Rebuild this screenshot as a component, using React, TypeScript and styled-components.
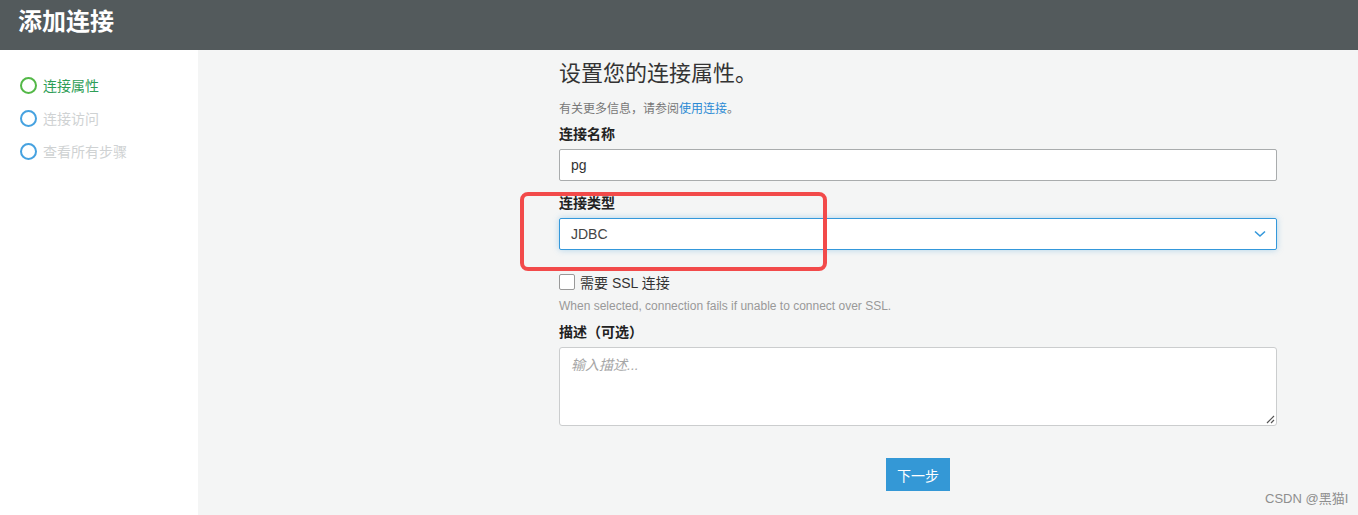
import React from 'react'
import styled, { createGlobalStyle } from 'styled-components'

const GlobalStyle = createGlobalStyle`
  html, body {
    margin: 0;
    padding: 0;
    background: #ffffff;
  }
  body {
    font-family: "Liberation Sans", "Noto Sans CJK SC", sans-serif;
    color: #333;
  }
`

const Page = styled.div`
  position: relative;
  width: 1358px;
  height: 515px;
  overflow: hidden;
`

const Header = styled.header`
  height: 50px;
  background: #535a5c;
  display: flex;
  align-items: center;
  padding: 0 0 0 18px;
  box-sizing: border-box;

  h1 {
    margin: -10px 0 0;
    font-size: 24px;
    line-height: 30px;
    font-weight: 700;
    color: #ffffff;
    font-family: "Noto Sans CJK SC", sans-serif;
  }
`

const Body = styled.div`
  display: flex;
  height: 465px;
`

const Sidebar = styled.nav`
  width: 198px;
  background: #ffffff;
  padding: 25px 0 0 20px;
  box-sizing: border-box;
  display: flex;
  flex-direction: column;
  gap: 13px;
`

const Step = styled.div<{ $active?: boolean }>`
  display: flex;
  align-items: center;
  gap: 6px;
  height: 20px;
  font-size: 14px;
  font-family: "Noto Sans CJK SC", sans-serif;
  color: ${p => (p.$active ? '#2f9e57' : '#cfd2d3')};

  &::before {
    content: '';
    width: 13px;
    height: 13px;
    border-radius: 50%;
    border: 2px solid ${p => (p.$active ? '#53b847' : '#46a2e0')};
    flex-shrink: 0;
  }
`

const Main = styled.main`
  flex: 1;
  background: #f4f5f5;
  padding: 8px 0 0 361px;
  box-sizing: border-box;
`

const Form = styled.div`
  width: 718px;
  display: flex;
  flex-direction: column;
`

const Title = styled.h2`
  margin: 0;
  font-size: 22px;
  line-height: 26px;
  font-weight: 400;
  color: #333;
  font-family: "Noto Sans CJK SC", sans-serif;
`

const Info = styled.p`
  margin: 16px 0 7px;
  font-size: 12px;
  line-height: 16px;
  color: #777;
  font-family: "Noto Sans CJK SC", sans-serif;

  a {
    color: #2a8ad4;
    text-decoration: none;
  }
`

const Label = styled.label<{ $gap?: number }>`
  display: block;
  margin: ${p => p.$gap ?? 0}px 0 6px;
  font-size: 14px;
  line-height: 20px;
  font-weight: 700;
  color: #222;
  font-family: "Noto Sans CJK SC", sans-serif;
`

const TextInput = styled.div`
  height: 32px;
  box-sizing: border-box;
  border: 1px solid #a9acad;
  border-radius: 2px;
  background: #fff;
  display: flex;
  align-items: center;
  padding: 0 11px;
  font-size: 14px;
  color: #333;
`

const Select = styled(TextInput)`
  border-color: #3498db;
  box-shadow: 0 0 6px rgba(52, 152, 219, 0.35);
  justify-content: space-between;
  padding: 0 10px 0 11px;
  color: #444;
`

const CheckRow = styled.div`
  display: flex;
  align-items: center;
  gap: 5px;
  margin: 22px 0 0;
  height: 20px;
  font-size: 14px;
  color: #333;
  font-family: "Liberation Sans", "Noto Sans CJK SC", sans-serif;
`

const Box = styled.span`
  width: 16px;
  height: 16px;
  box-sizing: border-box;
  border: 1px solid #999;
  border-radius: 2px;
  background: #fff;
`

const Help = styled.div`
  margin: 6px 0 0;
  font-size: 12px;
  line-height: 16px;
  color: #999;
`

const TextArea = styled.div`
  position: relative;
  height: 79px;
  box-sizing: border-box;
  border: 1px solid #cbcdce;
  border-radius: 3px;
  background: #fff;
  padding: 8px 11px;
  font-size: 14px;
  line-height: 18px;
  font-style: italic;
  color: #a6a6a6;
  font-family: "Liberation Sans", "Noto Sans CJK SC", sans-serif;
`

const Grip = styled.svg`
  position: absolute;
  right: 1px;
  bottom: 1px;
`

const Actions = styled.div`
  display: flex;
  justify-content: center;
  margin: 32px 0 0;
`

const Button = styled.button`
  width: 64px;
  height: 33px;
  border: none;
  border-radius: 0;
  background: #3498d6;
  color: #fff;
  font-size: 14px;
  font-family: "Noto Sans CJK SC", sans-serif;
  padding: 0;
`

const Highlight = styled.div`
  position: absolute;
  left: 520px;
  top: 192px;
  width: 307px;
  height: 79px;
  box-sizing: border-box;
  border: 4px solid #f24a4a;
  border-radius: 8px;
  pointer-events: none;
`

const Watermark = styled.div`
  position: absolute;
  left: 1265px;
  top: 491px;
  font-size: 13px;
  line-height: 16px;
  color: #8e8e8e;
  white-space: nowrap;
  font-family: "Liberation Sans", "Noto Sans CJK SC", sans-serif;
`

const App: React.FC = () => {
  return (
    <Page>
      <GlobalStyle />
      <Header>
        <h1>添加连接</h1>
      </Header>
      <Body>
        <Sidebar>
          <Step $active>连接属性</Step>
          <Step>连接访问</Step>
          <Step>查看所有步骤</Step>
        </Sidebar>
        <Main>
          <Form>
            <Title>设置您的连接属性。</Title>
            <Info>
              有关更多信息，请参阅<a href="#">使用连接</a>。
            </Info>
            <Label>连接名称</Label>
            <TextInput>pg</TextInput>
            <Label $gap={11}>连接类型</Label>
            <Select>
              <span>JDBC</span>
              <svg width="12" height="8" viewBox="0 0 12 8">
                <path d="M1 1.5 L6 6 L11 1.5" fill="none" stroke="#3498db" strokeWidth="1.6" />
              </svg>
            </Select>
            <CheckRow>
              <Box />
              <span>需要 SSL 连接</span>
            </CheckRow>
            <Help>When selected, connection fails if unable to connect over SSL.</Help>
            <Label $gap={7}>描述（可选）</Label>
            <TextArea>
              输入描述...
              <Grip width="11" height="11" viewBox="0 0 11 11">
                <path d="M10 3 L3 10 M10 7 L7 10" stroke="#555" strokeWidth="1.2" />
              </Grip>
            </TextArea>
            <Actions>
              <Button>下一步</Button>
            </Actions>
          </Form>
        </Main>
      </Body>
      <Highlight />
      <Watermark>CSDN @黑猫I</Watermark>
    </Page>
  )
}

export default App
